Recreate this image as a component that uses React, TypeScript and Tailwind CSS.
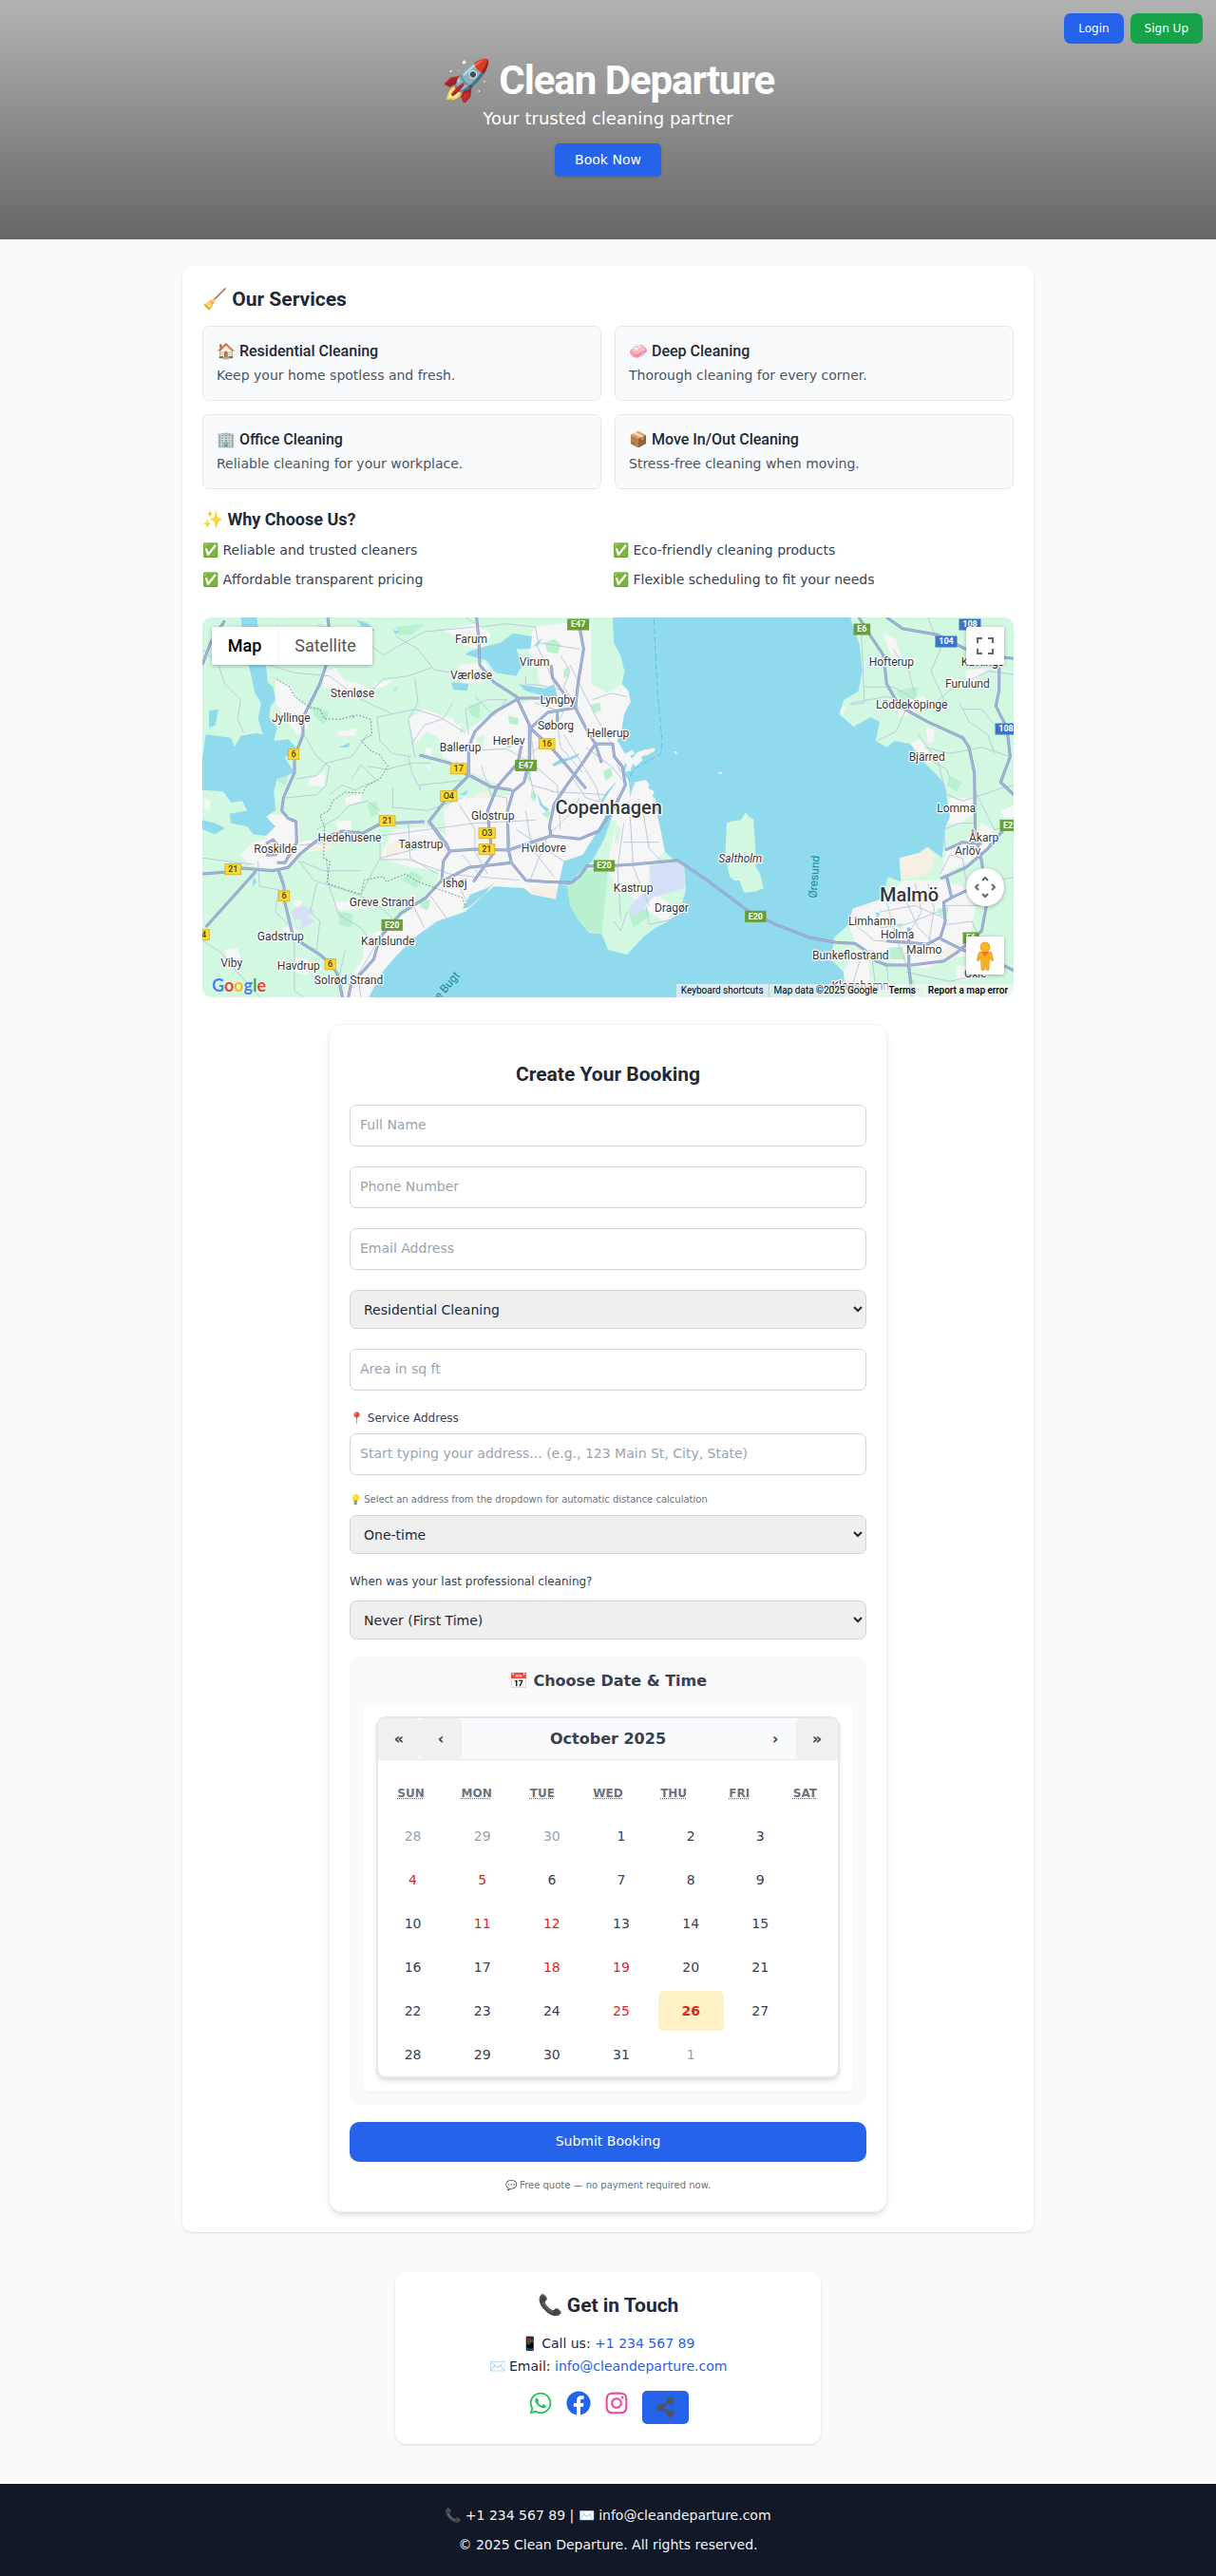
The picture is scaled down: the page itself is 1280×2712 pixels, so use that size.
import React from "react";
import { FaFacebook, FaInstagram, FaShareAlt, FaWhatsapp } from "react-icons/fa";

const services = [
  { title: "🏠 Residential Cleaning", text: "Keep your home spotless and fresh." },
  { title: "🧼 Deep Cleaning", text: "Thorough cleaning for every corner." },
  { title: "🏢 Office Cleaning", text: "Reliable cleaning for your workplace." },
  { title: "📦 Move In/Out Cleaning", text: "Stress-free cleaning when moving." },
];

const reasons = [
  "✅ Reliable and trusted cleaners",
  "✅ Eco-friendly cleaning products",
  "✅ Affordable transparent pricing",
  "✅ Flexible scheduling to fit your needs",
];

/* ---------- Map drawing (3 units per screen pixel) ---------- */

const water = [
  // Øresund and Køge Bugt
  "M1335,30 L1338,110 1360,150 1372,200 1364,240 1384,262 1392,296 1378,320 1370,340 1362,390 1350,420 1362,440 1380,470 1366,520 1386,545 1390,600 1400,560 1440,548 1464,600 1484,690 1500,770 1520,790 1560,810 1566,890 1546,960 1510,990 1470,1010 1430,1040 1380,1095 1320,1080 1304,1030 1260,1026 1230,990 1200,940 1192,880 1165,870 1155,915 1080,905 1055,885 960,880 930,905 870,960 780,990 710,1040 650,1100 600,1160 565,1230 2068,1230 2064,1150 2024,1110 2035,1040 2080,1000 2092,950 2180,920 2205,850 2245,865 2240,790 2300,775 2330,755 2375,790 2380,740 2386,690 2400,660 2390,600 2380,550 2320,490 2275,430 2225,420 2200,440 2165,420 2178,360 2150,345 2095,375 2050,335 2065,290 2110,265 2123,200 2115,120 2085,30Z",
  // Roskilde Fjord
  "M160,30 L210,30 215,60 190,100 195,180 240,180 245,235 262,250 270,290 255,310 250,345 275,380 265,420 310,415 335,440 300,475 330,520 275,540 265,580 270,640 240,660 270,690 240,720 200,715 180,690 130,680 125,650 180,640 165,610 130,615 105,580 39,575 39,470 50,400 130,410 140,440 160,405 210,395 230,400 215,350 225,300 205,270 195,220 170,120Z",
  "M60,325 L90,320 80,370 60,380Z",
  "M39,670 L80,680 110,695 80,715 39,700Z",
  "M930,122 L980,110 1020,80 1080,90 1075,130 1030,130 1050,180 1030,215 965,205 935,165 870,148 880,138Z",
  "M1038,240 L1120,255 1150,240 1160,280 1130,282 1060,262Z",
  "M825,235 L880,240 875,262 832,258Z",
  "M527,38 L560,48 583,72 552,72Z",
  "M1180,800 L1240,780 1290,700 1320,640 1340,640 1308,730 1270,800 1220,845 1205,880 1165,870Z",
  "M470,440 L505,425 500,440Z",
  "M950,880 L885,905 860,950 880,945 935,900Z",
  "M1142,494 L1170,478 1200,472 1230,458 1225,470 1190,484 1150,500Z",
  "M1098,585 L1112,620 1135,636 1126,645 1104,622Z",
  "M1298,610 L1312,585 1345,548 1342,556 1318,590 1304,615Z",
  "M1112,96 L1100,118 1084,122 1100,104Z",
  "M850,590 L878,575 872,590Z",
  "M200,850 L210,865 198,880Z",
  "M640,70 L665,74 650,84Z",
  "M510,335 L520,345 512,352Z",
  "M725,560 L730,570 724,580Z",
  "M528,700 L536,706 530,716Z",
  "M2165,960 L2180,965 2170,980Z",
];

const landOnWater = [
  "M1695,680 L1708,674 1740,670 1755,645 1765,660 1780,668 1784,740 1788,820 1800,840 1811,885 1790,895 1750,900 1735,860 1720,862 1705,850 1690,790Z",
];

const forest = [
  "M1192,880 L1240,830 1320,820 1318,900 1300,1030 1260,1020 1230,990 1200,940Z",
  "M290,480 L320,500 300,560 275,545Z",
  "M650,60 L740,50 700,85 660,85Z",
  "M405,50 L440,60 425,110 400,90Z",
  "M1385,960 L1445,930 1450,975 1400,1010Z",
  "M2400,530 L2438,550 2420,580 2390,560Z",
  "M560,620 L590,610 595,650 570,660Z",
  "M290,270 L330,290 320,330 280,320Z",
  "M470,960 L515,965 510,1010 470,1000Z",
  "M2230,260 L2300,250 2290,290 2240,290Z",
  "M2480,1120 L2540,1110 2530,1160 2490,1165Z",
  "M1340,140 L1362,170 1360,190 1325,170Z",
  "M380,310 L410,315 440,330 425,370 395,345Z",
  "M245,130 L265,150 262,185 245,180Z",
  "M640,255 L660,245 650,270Z",
];

// Parks and woods that lie inside the built-up areas
const parks: [string, string][] = [
  ["M1268,30 L1335,40 1362,150 1370,200 1330,265 1268,240Z", "#d3f8e2"],
  ["M960,215 L1040,215 1130,250 1100,270 1040,280 975,235Z", "#d3f8e2"],
  ["M860,340 L900,290 1000,285 1030,292 960,330 900,370 850,400Z", "#d3f8e2"],
  ["M850,500 L900,540 940,560 1000,580 940,600 870,600 830,570Z", "#d3f8e2"],
  ["M905,410 L930,400 925,440 905,440Z", "#d3f8e2"],
  ["M1120,110 L1150,98 1170,115 1162,145 1130,140Z", "#b9f0cf"],
  ["M1180,195 L1198,185 1194,215 1180,220Z", "#b9f0cf"],
  ["M1265,305 L1295,300 1298,325 1275,332Z", "#b9f0cf"],
  ["M880,310 L915,300 915,350 885,340Z", "#b9f0cf"],
  ["M1005,340 L1040,350 1035,370 1008,365Z", "#b9f0cf"],
  ["M980,425 L1030,415 1010,445Z", "#b9f0cf"],
  ["M1305,515 L1330,505 1335,530 1312,545Z", "#b9f0cf"],
  ["M1055,525 L1078,510 1072,550Z", "#b9f0cf"],
  ["M700,830 L735,850 715,885 670,860Z", "#b9f0cf"],
  ["M730,915 L760,925 750,955 725,945Z", "#b9f0cf"],
  ["M1078,575 L1095,590 1088,612 1075,600Z", "#b9f0cf"],
  ["M1110,650 L1140,640 1130,665Z", "#b9f0cf"],
  ["M1345,685 L1362,695 1352,745 1340,740Z", "#d3f8e2"],
  ["M1080,740 L1100,730 1095,755Z", "#b9f0cf"],
  ["M2230,1000 L2250,995 2245,1015Z", "#b9f0cf"],
  ["M2360,950 L2395,945 2390,975 2362,970Z", "#b9f0cf"],
  ["M2200,1075 L2250,1070 2260,1110 2210,1110Z", "#b9f0cf"],
];

const urban = [
  // Greater Copenhagen
  "M1090,60 L1200,45 1268,50 1268,240 1320,270 1360,240 1384,262 1392,300 1362,390 1350,420 1380,450 1366,520 1386,545 1384,700 1320,660 1290,720 1240,780 1180,800 1165,870 1155,915 1080,905 1055,885 960,880 860,960 780,990 710,1040 650,1100 600,1160 565,1230 480,1230 510,1160 545,1110 550,1040 600,1020 690,960 770,890 790,830 700,820 600,790 640,700 760,690 810,720 800,640 850,600 1010,590 1000,570 890,520 800,470 780,390 900,350 1000,290 1060,300 1110,260 1090,170 1060,120Z",
  "M1384,560 L1440,548 1464,600 1484,690 1500,770 1450,810 1450,900 1480,910 1540,950 1500,990 1450,960 1360,880 1330,980 1318,820 1340,700Z",
  "M250,650 L290,655 345,675 345,740 400,730 450,760 340,775 310,825 190,815 160,780 200,740 240,730Z",
  "M270,225 L320,250 340,290 380,320 370,380 340,400 300,350 270,300Z",
  "M420,205 L460,190 490,230 540,240 580,270 530,290 470,260 420,250Z",
  "M690,350 L740,320 830,350 860,400 800,420 750,390 710,430Z",
  "M800,70 L900,50 950,80 930,130 870,120 850,100Z",
  "M850,180 L930,170 960,220 900,240 850,230Z",
  "M460,675 L510,670 510,705 470,710Z",
  "M380,540 L425,515 425,565 370,560Z",
  "M490,600 L540,585 540,610 490,625Z",
  "M465,390 L530,380 520,405 470,405Z",
  "M290,1010 L330,1005 360,1050 320,1050Z",
  "M110,1080 L150,1075 160,1110 120,1125Z",
  "M330,1100 L370,1110 370,1160 330,1150Z",
  "M450,930 L540,925 560,950 470,955Z",
  "M580,240 L640,225 620,245 590,255Z",
  "M45,600 L65,610 60,640 45,635Z",
  "M100,55 L130,60 120,80 100,75Z",
  "M745,440 L765,445 760,465 742,460Z",
  "M745,500 L760,495 755,515Z",
  "M330,920 L355,925 345,945 328,940Z",
  // Skåne
  "M2180,920 L2260,860 2320,860 2380,860 2440,880 2480,950 2450,1100 2380,1110 2330,1140 2260,1130 2160,1100 2100,1060 2080,1000 2092,950Z",
  "M2380,680 L2400,600 2470,600 2480,650 2430,680Z",
  "M2390,760 L2440,740 2480,710 2500,680 2535,700 2520,760 2460,800 2400,830 2370,850Z",
  "M2275,430 L2300,415 2325,440 2340,490 2320,490Z",
  "M2325,375 L2350,385 2350,420 2330,430Z",
  "M2190,80 L2230,100 2245,160 2220,170Z",
  "M2235,300 L2320,280 2330,320 2260,340 2240,345Z",
  "M2450,200 L2540,180 2500,210 2450,250Z",
  "M2560,640 L2601,625 2601,660 2570,665Z",
  "M2100,1080 L2140,1080 2150,1230 2080,1230 2064,1150Z",
  "M2050,320 L2070,310 2060,340Z",
  "M2420,1130 L2470,1130 2460,1170 2420,1180Z",
];

const industrial = [
  "M1075,880 L1160,880 1155,920 1080,905Z",
  "M2240,790 L2300,775 2330,755 2350,780 2345,830 2300,850 2250,855Z",
  "M620,750 L660,735 660,780 620,790Z",
  "M370,745 L450,745 430,770 370,760Z",
  "M900,585 L950,580 940,600 900,600Z",
  "M2380,1080 L2430,1060 2420,1110 2380,1100Z",
  "M2075,1000 L2090,960 2150,930 2140,948 2100,960Z",
];

const airports = [
  "M1450,815 L1545,800 1560,820 1562,885 1510,900 1460,915 1440,940 1405,975 1385,950 1420,910 1460,890Z",
  "M318,960 L350,940 395,955 370,975 395,990 345,1015 355,985 330,985Z",
];

const minorRoads = [
  "M39,130 L90,180 110,240 160,290 150,350 170,395",
  "M250,180 L330,205 440,215 540,290 640,335 710,320 790,345 870,395",
  "M440,100 L540,95 610,150 650,125 740,75 900,60",
  "M650,90 L720,130 770,195 830,205",
  "M545,290 L610,225 690,215 760,190",
  "M640,335 L590,345 600,420 640,460 700,470",
  "M710,220 L720,300 690,350 710,470",
  "M335,540 L400,530 430,490 510,470 560,400",
  "M360,400 L400,470 440,500 430,560 400,590 300,600",
  "M510,540 L540,495 590,545 520,575 480,560 440,590",
  "M600,640 L560,610 500,625 470,660 400,700",
  "M560,500 L620,510 700,490 760,490",
  "M640,570 L640,630 750,640 860,600",
  "M345,750 L600,720 900,680 1090,670",
  "M600,720 L600,795 690,795 820,840 900,850",
  "M690,680 L695,790 780,840",
  "M345,800 L390,860 530,905 600,945 640,980 620,1010",
  "M540,830 L420,830 350,800",
  "M540,905 L600,790 720,760",
  "M215,800 L220,880 280,890 270,960 310,1000",
  "M400,870 L380,960 410,990 400,1080 330,1050 330,1210 360,1230",
  "M430,790 L440,880 470,970 540,1010 560,1040",
  "M39,790 L120,800 200,810",
  "M39,1050 L100,1090 140,1140 220,1230",
  "M600,1040 L530,1160 540,1230",
  "M490,1080 L470,1170 520,1200",
  "M870,30 L920,60 1000,50 1090,60 1100,110 1230,130",
  "M1095,120 L1130,190 1150,240",
  "M1060,215 L1060,240 1110,245 1180,260",
  "M1170,150 L1200,200 1180,250 1230,320",
  "M900,280 L960,340 1000,290 940,290 870,320 880,400",
  "M700,430 L740,370 800,350 830,300",
  "M690,470 L700,520 720,560 860,545",
  "M900,450 L1000,445 1060,480 1090,600",
  "M920,500 L950,590 1000,600 1010,750",
  "M1080,420 L1090,500 1160,560 1170,700",
  "M1090,300 L1180,330 1160,360 1170,440 1240,520",
  "M1110,430 L1060,480 1080,560 1150,580",
  "M1140,580 L1320,590",
  "M1210,540 L1250,600 1320,620",
  "M1200,180 L1250,280 1280,340 1330,430 1360,520",
  "M1270,290 L1330,270 1380,280",
  "M1250,440 L1330,500 1380,560",
  "M1180,400 L1280,560 1310,650",
  "M1230,600 L1200,650 1130,720 1070,870",
  "M1030,700 L1180,800",
  "M1060,640 L1080,760 1150,850",
  "M850,620 L900,700 900,770 940,840",
  "M860,780 L920,850 1040,860",
  "M700,930 L740,1010",
  "M760,910 L810,980",
  "M850,880 L880,940 960,870",
  "M1370,680 L1350,820 1360,980",
  "M1390,660 L1400,820 1450,940",
  "M1430,640 L1450,760 1490,800",
  "M1370,740 L1480,740",
  "M1350,890 L1450,880",
  "M1440,940 L1450,1000 1540,980",
  "M1340,990 L1360,1020 1380,960",
  "M2120,80 L2130,300 2085,305",
  "M2130,250 L2220,250 2260,270 2330,320 2400,260 2520,200 2601,210",
  "M2220,130 L2270,200 2290,280",
  "M2090,300 L2200,280 2270,300 2230,390 2170,420",
  "M2330,30 L2370,130 2340,200 2380,290 2350,330",
  "M2430,300 L2460,360 2520,400 2540,460",
  "M2440,320 L2500,320 2550,380",
  "M2320,440 L2400,460 2500,440 2590,470",
  "M2300,400 L2360,480 2390,590",
  "M2390,590 L2440,610 2560,570 2601,560",
  "M2400,540 L2390,510 2340,480",
  "M2480,580 L2540,700 2601,690",
  "M2385,760 L2380,700 2430,680 2480,680",
  "M2370,840 L2400,780 2440,790 2450,860",
  "M2100,1000 L2160,1050 2300,1060",
  "M2080,1230 L2120,1100 2150,1080 2170,1230",
  "M2200,930 L2240,1070 2290,1200",
  "M2250,900 L2300,1010 2380,1090",
  "M2180,960 L2290,940 2380,980",
  "M2180,1010 L2260,1000 2360,960",
  "M2290,870 L2310,960 2250,1060",
  "M2330,870 L2350,950 2330,1080",
  "M2260,1150 L2400,1180 2520,1150",
  "M2200,1130 L2210,1230",
  "M2380,940 L2500,940",
  "M2390,1000 L2470,990 2510,1090",
  "M2540,860 L2601,852",
];

const majorRoads = [
  "M435,30 L440,70 430,180 410,240 380,300 357,345 357,400 330,470 330,520 295,600 290,640 310,665 335,675 337,740 300,805 275,805",
  "M39,180 L65,110 110,40",
  "M39,840 L110,835 165,822 260,830 310,820 350,775 400,735 480,705 545,712 600,682 740,675",
  "M240,745 L262,732 280,755 270,780 240,780",
  "M208,832 L120,930 50,1008",
  "M278,825 L297,880 297,920 325,1035 355,1060 410,1095 440,1120 465,1155 482,1230",
  "M725,465 L820,490 880,530",
  "M1130,285 L1088,285 1040,285 960,330 900,390 880,440 880,530 820,590 755,675 810,745 820,770 800,800 795,860 745,915 665,965 600,1040 580,1110 540,1155 510,1180 500,1230",
  "M885,530 L950,565 1017,575",
  "M905,30 L912,100 915,180 960,235 1030,280 1072,370 1072,480 1055,550 1020,580 1003,640 1005,760 1015,805 1060,860 1120,865 1205,868 1232,845 1255,815 1320,815 1400,810 1540,797 1640,865 1760,955 1850,1000 1960,1042 2040,1057 2100,1060 2130,1080 2165,1115 2200,1128 2280,1128 2380,1115 2420,1090 2500,1020 2517,930 2500,800 2480,720 2477,520 2460,440 2440,410 2330,360 2240,310 2200,240 2190,150 2150,90 2112,30",
  "M1230,60 L1243,130 1225,240 1217,315 1250,380 1280,430",
  "M1217,315 L1130,330 1075,380 1072,480",
  "M1140,180 L1145,220 1180,270 1220,310",
  "M1160,325 L1160,360",
  "M1075,380 L1140,440 1200,510 1250,570",
  "M1280,430 L1240,490 1190,560 1150,620 1135,690 1140,720",
  "M1280,430 L1300,490",
  "M755,675 L820,768 900,762 1005,765 1140,720 1230,730 1290,705 1340,630 1375,560 1365,500 1340,470 1335,430 1280,430",
  "M1050,420 L1035,490 970,565 940,640 945,700 955,780 895,865",
  "M800,862 L880,820 1015,805",
  "M2200,30 L2250,65 2360,85 2450,130 2500,150 2601,160",
  "M2555,190 L2555,260 2545,310 2580,380 2590,470 2560,550 2601,590",
  "M2370,855 L2450,820 2520,760 2570,700",
  "M2385,765 L2440,740 2500,745",
  "M2390,850 L2405,915 2380,930 2385,990 2370,1040 2330,1062 2200,1052",
  "M2405,915 L2480,880",
  "M2370,1045 L2440,1080 2530,1110 2601,1145",
  "M2270,1010 L2270,1130 2280,1230",
];

type Label = [string, number, number];
const towns: Label[] = [
  ["Farum", 888, 112], ["Virum", 1088, 183], ["Værløse", 888, 225], ["Stenløse", 513, 283],
  ["Jyllinge", 319, 361], ["Lyngby", 1161, 304], ["Søborg", 1155, 385], ["Hellerup", 1320, 409],
  ["Herlev", 1007, 433], ["Ballerup", 854, 454], ["Glostrup", 956, 670], ["Hvidovre", 1117, 772],
  ["Hedehusene", 504, 739], ["Taastrup", 729, 760], ["Roskilde", 270, 775], ["Ishøj", 836, 883],
  ["Greve Strand", 606, 943], ["Gadstrup", 286, 1051], ["Karlslunde", 625, 1066], ["Viby", 131, 1135],
  ["Havdrup", 343, 1144], ["Solrød Strand", 501, 1189], ["Hofterup", 2215, 184], ["Kävlinge", 2503, 184],
  ["Furulund", 2455, 253], ["Löddeköpinge", 2279, 319], ["Bjärred", 2327, 484], ["Lomma", 2420, 646],
  ["Åkarp", 2507, 739], ["Arlöv", 2456, 781], ["Kastrup", 1400, 896], ["Dragør", 1521, 961],
  ["Limhamn", 2154, 1003], ["Holma", 2234, 1044], ["Malmo", 2318, 1093], ["Bunkeflostrand", 2086, 1111],
  ["Klagshamn", 2117, 1206], ["Oxie", 2480, 1167],
];

type Shield = [string, number, number, number, string, string];
const Y = "#fdd835";
const G = "#689f38";
const B = "#3b74c9";
const shields: Shield[] = [
  ["6", 327, 462, 34, Y, "#4a3f10"], ["17", 848, 507, 50, Y, "#4a3f10"], ["16", 1127, 429, 50, Y, "#4a3f10"],
  ["O4", 817, 594, 52, Y, "#4a3f10"], ["21", 623, 672, 50, Y, "#4a3f10"], ["O3", 938, 711, 52, Y, "#4a3f10"],
  ["21", 937, 762, 50, Y, "#4a3f10"], ["21", 136, 825, 50, Y, "#4a3f10"], ["6", 297, 909, 34, Y, "#4a3f10"],
  ["4", 44, 1032, 34, Y, "#4a3f10"], ["6", 443, 1125, 34, Y, "#4a3f10"],
  ["E47", 1226, 52, 66, G, "#ffffff"], ["E47", 1061, 497, 66, G, "#ffffff"], ["E20", 638, 1001, 64, G, "#ffffff"],
  ["E20", 1308, 814, 64, G, "#ffffff"], ["E6", 2122, 67, 50, G, "#ffffff"], ["E20", 1786, 974, 64, G, "#ffffff"],
  ["E22", 2591, 686, 64, G, "#ffffff"], ["E6", 2466, 1042, 48, G, "#ffffff"],
  ["108", 2463, 52, 66, B, "#ffffff"], ["104", 2388, 106, 66, B, "#ffffff"], ["108", 2577, 382, 66, B, "#ffffff"],
];

function MapDrawing() {
  return (
    <svg
      className="block h-full w-full"
      viewBox="39 30 2562 1200"
      preserveAspectRatio="xMidYMid slice"
      role="img"
      aria-label="Map of Copenhagen and Malmö"
      fontFamily="Roboto, sans-serif"
    >
      <rect x="-400" y="-400" width="3600" height="2200" fill="#d3f8e2" />
      {forest.map((d) => <path key={d} d={d} fill="#b9f0cf" />)}
      {urban.map((d) => <path key={d} d={d} fill="#f6f6f7" />)}
      {parks.map(([d, fill]) => <path key={d} d={d} fill={fill} />)}
      {water.map((d) => <path key={d} d={d} fill="#90daee" />)}
      {landOnWater.map((d) => <path key={d} d={d} fill="#d3f8e2" />)}
      {forest.slice(0, 1).map((d) => <path key={d} d={d} fill="#b9f0cf" />)}
      <path d="M1320,830 L1350,880 1345,990 1400,1010 1440,1000 1430,1040 1380,1092 1320,1078 1300,1030Z" fill="#d3f8e2" />
      {industrial.map((d) => <path key={d} d={d} fill="#f5efe4" />)}
      {airports.map((d) => <path key={d} d={d} fill="#d5dff7" />)}
      <g fill="#f6f6f7">
        <path d="M1375,460 L1398,448 1404,462 1390,466 1396,476 1412,456 1440,446 1446,454 1424,472 1430,480 1408,500 1398,492 1390,515 1372,518 1380,498 1370,480Z" />
        <path d="M1404,550 L1440,544 1452,560 1438,572 1462,576 1466,588 1446,594 1468,600 1470,612 1450,616 1476,622 1440,640 1412,615 1402,580Z" />
        <circle cx="1534" cy="457" r="4" />
        <ellipse cx="1675" cy="521" rx="7" ry="3" />
      </g>
      <path d="M1430,468 L1446,446 1466,442 1468,452 1446,464Z" fill="#f5efe4" />
      <g fill="none" stroke="#bccada" strokeWidth="3" strokeLinejoin="round">
        {minorRoads.map((d) => <path key={d} d={d} />)}
      </g>
      <g fill="none" stroke="#8a9cc4" strokeWidth="9" strokeLinejoin="round">
        {majorRoads.map((d) => <path key={d} d={d} />)}
      </g>
      <g fill="none" stroke="#a9b9da" strokeWidth="4" strokeLinejoin="round">
        {majorRoads.map((d) => <path key={d} d={d} />)}
      </g>
      <g fill="none" stroke="#6f8580" strokeWidth="3" strokeDasharray="5 6">
        <path d="M273,225 L315,250 330,280 380,315 410,320 425,350 470,352 530,338 570,352 575,400 540,420 570,450 600,465 625,500 600,540 560,560 545,585 490,582 450,610 440,640 410,655 425,690 422,790 442,800 432,870 540,905 550,860 610,848 620,865 680,840 720,865 860,915 870,945" />
      </g>
      <path d="M1465,35 L1475,250 1490,410 1488,460 1400,510 1385,545" fill="none" stroke="#5cc3e2" strokeWidth="3" strokeDasharray="20 8" />

      {shields.map(([text, x, y, w, fill, ink], i) => (
        <g key={i}>
          <rect x={x - w / 2} y={y - 16} width={w} height="33" fill={fill} stroke={fill === Y ? "#d9b62c" : fill} strokeWidth="3" />
          <text x={x} y={y + 9} fontSize="27" fontWeight={fill === Y ? 500 : 700} textAnchor="middle" fill={ink}>
            {text}
          </text>
        </g>
      ))}

      <g textAnchor="middle" fill="#33373d" stroke="#ffffff" strokeWidth="7" strokeLinejoin="round" paintOrder="stroke" fontSize="36">
        {towns.map(([name, x, y]) => (
          <text key={name} x={x} y={y}>{name}</text>
        ))}
        <text x="1738" y="804" fontStyle="italic">Saltholm</text>
        <text x="1322" y="651" fontSize="60" fontWeight="500">Copenhagen</text>
        <text x="2271" y="927" fontSize="60" fontWeight="500">Malmö</text>
      </g>
      <g fill="#17889c" fontSize="36" textAnchor="middle">
        <text transform="translate(1983 850) rotate(-86)">Øresund</text>
        <text transform="translate(800 1225) rotate(-50)">Køge Bugt</text>
      </g>
    </svg>
  );
}

function MapView() {
  return (
    <div className="relative mt-[29px] h-[400px] overflow-hidden rounded-[10px] font-[Roboto,sans-serif]">
      <MapDrawing />
      <div className="absolute left-2.5 top-2.5 flex text-[18px] leading-10 shadow-[0_1px_4px_rgba(0,0,0,0.3)]">
        <button type="button" className="w-[69px] rounded-l-xs bg-white font-medium text-black">Map</button>
        <button type="button" className="w-[100px] rounded-r-xs border-l border-gray-100 bg-white text-[#565656]">Satellite</button>
      </div>
      <button type="button" aria-label="Toggle fullscreen view" className="absolute right-2.5 top-2.5 grid size-10 place-items-center rounded-xs bg-white shadow-[0_1px_4px_rgba(0,0,0,0.3)]">
        <svg className="size-[18px]" viewBox="0 0 18 18" fill="#666666" aria-hidden="true">
          <path d="M0 0v6h2V2h4V0H0zm16 0h-4v2h4v4h2V0h-2zm0 16h-4v2h6v-6h-2v4zM2 12H0v6h6v-2H2v-4z" />
        </svg>
      </button>
      <button type="button" aria-label="Map camera controls" className="absolute bottom-24 right-2.5 grid size-10 place-items-center rounded-full bg-white shadow-[0_1px_4px_rgba(0,0,0,0.3)]">
        <svg className="size-6" viewBox="0 0 24 24" fill="none" stroke="#666666" strokeWidth="2" aria-hidden="true">
          <path d="M9 5 12 2l3 3M9 19l3 3 3-3M5 9l-3 3 3 3M19 9l3 3-3 3" />
        </svg>
      </button>
      <button type="button" aria-label="Open Street View" className="absolute bottom-6 right-2.5 grid size-10 place-items-center rounded-xs bg-white shadow-[0_1px_4px_rgba(0,0,0,0.3)]">
        <svg className="h-[31px] w-[18px]" viewBox="0 0 18 31" aria-hidden="true">
          <path d="M4.500 11h9c1.500 0 2.300.8 2.600 2.200l1.400 6.300c.2 1-1.700 1.600-2.200.6L13.500 16l-.6 14.200H10L9 22l-1 8.200H5.100L4.500 16l-1.800 4.100c-.5 1-2.400.4-2.200-.6l1.400-6.300C2.200 11.800 3 11 4.500 11Z" fill="#fbb11c" stroke="#d3901a" strokeWidth=".7" />
          <path d="m4.800 11 4.200 5.500L13.200 11Z" fill="#e8782b" />
          <circle cx="9" cy="6" r="5" fill="#fcb61f" stroke="#d3901a" strokeWidth=".7" />
        </svg>
      </button>
      <div className="absolute bottom-0.5 left-2.5 font-[Lato,sans-serif] text-[18px] font-bold leading-[22px] [text-shadow:0_0_2px_#fff]">
        <span className="text-[#4285f4]">G</span>
        <span className="text-[#ea4335]">o</span>
        <span className="text-[#fbbc04]">o</span>
        <span className="text-[#4285f4]">g</span>
        <span className="text-[#34a853]">l</span>
        <span className="text-[#ea4335]">e</span>
      </div>
      <div className="absolute bottom-0 right-0 flex gap-px text-[10px] leading-[14px] text-black">
        <button type="button" className="bg-[#f5f5f5]/70 px-[5px]">Keyboard shortcuts</button>
        <span className="bg-[#f5f5f5]/70 px-[5px]">Map data ©2025 Google</span>
        <a href="#terms" className="bg-[#f5f5f5]/70 px-[6px] font-medium">Terms</a>
        <a href="#report" className="bg-[#f5f5f5]/70 px-[6px] font-medium">Report a map error</a>
      </div>
    </div>
  );
}

/* ---------- Calendar ---------- */

const weekdays: [string, string][] = [
  ["Sun", "Sunday"], ["Mon", "Monday"], ["Tue", "Tuesday"], ["Wed", "Wednesday"],
  ["Thu", "Thursday"], ["Fri", "Friday"], ["Sat", "Saturday"],
];
const shown = [28, 29, 30, ...Array.from({ length: 31 }, (_, i) => i + 1), 1];
const weekend = [4, 5, 11, 12, 18, 19, 25];

function dayStyle(day: number, index: number) {
  if (index < 3 || index === shown.length - 1) return "text-gray-400";
  if (day === 26) return "bg-[#fef3c7] font-bold text-[#dc2626]";
  if (weekend.includes(day)) return "text-[#dc2626]";
  return "text-[#374151]";
}

function Calendar() {
  const nav = "h-[43px] w-11 rounded-[5px] text-[16px] font-bold leading-[43px] text-[#374151]";
  return (
    <div className="overflow-hidden rounded-[10px] border-2 border-[#e5e7eb] bg-white shadow-md">
      <div className="flex border-b border-[#e5e7eb] bg-[#f9fafb]">
        <button type="button" aria-label="Previous year" className={`${nav} bg-[#f0f0f0]`}>«</button>
        <button type="button" aria-label="Previous month" className={`${nav} bg-[#f0f0f0]`}>‹</button>
        <button type="button" className="grow text-[16px] font-bold text-[#374151]">October 2025</button>
        <button type="button" aria-label="Next month" className={nav}>›</button>
        <button type="button" aria-label="Next year" className={`${nav} bg-[#f0f0f0]`}>»</button>
      </div>
      <div className="grid grid-cols-7 pb-[13px] pt-[27px] text-center text-[12px] font-bold uppercase leading-[17px] text-[#6b7280]">
        {weekdays.map(([short, long]) => (
          <div key={short}>
            <abbr title={long}>{short}</abbr>
          </div>
        ))}
      </div>
      <div className="flex flex-wrap">
        {shown.map((day, i) => (
          <button key={i} type="button" className={`m-0.5 h-[42px] w-1/7 rounded-[5px] ${dayStyle(day, i)}`}>
            {day}
          </button>
        ))}
      </div>
    </div>
  );
}

/* ---------- Booking form ---------- */

const fieldClass = "block h-11 w-full rounded-[7px] border border-[#d1d5db] bg-white px-2.5 pb-0.5 placeholder:text-[#9ca3af]";
const selectClass = "block h-[41px] w-full rounded-[7px] border border-[#d1d5db] bg-[#efefef] px-2.5 text-[#1f2937]";
const heading = "font-[Roboto,sans-serif] font-bold text-[#1f2937]";

function BookingForm() {
  return (
    <form
      className="mx-auto mt-7 max-w-[588px] rounded-[14px] border border-[#f3f4f6] bg-white px-[21px] pb-5 pt-[38px] shadow-md"
      onSubmit={(e) => e.preventDefault()}
    >
      <h2 className={`${heading} mb-[18px] text-center text-[21px] leading-7`}>Create Your Booking</h2>
      <div className="flex flex-col gap-[21px]">
        <input className={fieldClass} type="text" aria-label="Full Name" placeholder="Full Name" />
        <input className={fieldClass} type="tel" aria-label="Phone Number" placeholder="Phone Number" />
        <input className={fieldClass} type="email" aria-label="Email Address" placeholder="Email Address" />
        <select className={selectClass} aria-label="Service" defaultValue="Residential Cleaning">
          <option>Residential Cleaning</option>
          <option>Deep Cleaning</option>
          <option>Office Cleaning</option>
          <option>Move In/Out Cleaning</option>
        </select>
        <input className={fieldClass} type="text" aria-label="Area in sq ft" placeholder="Area in sq ft" />
      </div>

      <label htmlFor="address" className="mb-[7px] mt-5 block text-[12px] leading-[18px] text-[#374151]">
        📍 Service Address
      </label>
      <input
        id="address"
        className={fieldClass}
        type="text"
        placeholder="Start typing your address... (e.g., 123 Main St, City, State)"
      />
      <p className="mb-[9px] mt-[19px] text-[10px] leading-[14px] text-[#6b7280]">
        💡 Select an address from the dropdown for automatic distance calculation
      </p>
      <select className={selectClass} aria-label="Frequency" defaultValue="One-time">
        <option>One-time</option>
        <option>Weekly</option>
        <option>Monthly</option>
      </select>

      <label htmlFor="last" className="mb-[11px] mt-5 block text-[12px] leading-[18px] text-[#374151]">
        When was your last professional cleaning?
      </label>
      <select id="last" className={selectClass} defaultValue="Never (First Time)">
        <option>Never (First Time)</option>
        <option>Within a month</option>
      </select>

      <div className="mt-[18px] rounded-[7px] bg-[#f9fafb] px-3.5 py-3.5">
        <h3 className="mb-[11px] text-center text-[16px] font-bold leading-6 text-[#374151]">📅 Choose Date &amp; Time</h3>
        <div className="rounded-[7px] bg-white p-3.5 shadow-xs">
          <Calendar />
        </div>
      </div>

      <button type="submit" className="mt-[18px] h-[42px] w-full rounded-[10px] bg-[#2563eb] pb-0.5 text-white">
        Submit Booking
      </button>
      <p className="mt-[18px] text-center text-[10px] leading-[14px] text-[#6b7280]">💬 Free quote — no payment required now.</p>
    </form>
  );
}

export default function App() {
  return (
    <div className="bg-[#f9fafb] font-['DejaVu_Sans',sans-serif] text-[14px] leading-[21px] text-[#1f2937]">
      <header className="relative flex h-[252px] flex-col items-center justify-center bg-linear-to-b/srgb from-[#b3b3b3] to-[#666666] pb-0.5 text-white">
        <div className="absolute right-3.5 top-3.5 flex gap-[7px] text-[12px] leading-[18px]">
          <button type="button" className="rounded-[7px] bg-[#2563eb] px-[15px] py-[7px]">Login</button>
          <button type="button" className="rounded-[7px] bg-[#16a34a] px-[15px] py-[7px]">Sign Up</button>
        </div>
        <h1 className="font-[Roboto,sans-serif] text-[42px] font-bold leading-[42px] tracking-tight">🚀 Clean Departure</h1>
        <p className="mt-[7px] text-[18px] leading-6">Your trusted cleaning partner</p>
        <button type="button" className="mt-3.5 h-[35px] rounded-[5px] bg-[#2563eb] px-[21px] shadow-sm">Book Now</button>
      </header>

      <main>
        <section className="mx-auto mt-7 max-w-[896px] rounded-[10px] bg-white p-[21px] shadow-sm">
          <h2 className={`${heading} mb-3.5 text-[21px] leading-7`}>🧹 Our Services</h2>
          <div className="grid grid-cols-2 gap-3.5">
            {services.map((s) => (
              <article key={s.title} className="rounded-[7px] border border-[#e5e7eb] bg-[#f9fafb] px-3.5 pb-[15px] pt-3.5">
                <h3 className="font-[Roboto,sans-serif] text-[16px] font-medium leading-[23px]">{s.title}</h3>
                <p className="mt-1 text-[#4b5563]">{s.text}</p>
              </article>
            ))}
          </div>
          <h3 className={`${heading} mb-2.5 mt-5 text-[18px] leading-6`}>✨ Why Choose Us?</h3>
          <ul className="grid grid-cols-2 gap-2.5 text-[#374151]">
            {reasons.map((r) => (
              <li key={r}>{r}</li>
            ))}
          </ul>
          <MapView />
          <BookingForm />
        </section>

        <section className="mx-auto mt-[42px] max-w-[448px] rounded-[10px] bg-white p-[21px] text-center shadow-sm">
          <h2 className={`${heading} mb-3.5 text-[21px] leading-7`}>📞 Get in Touch</h2>
          <p className="leading-6">
            📱 Call us: <a href="tel:+123456789" className="text-[#2563eb]">+1 234 567 89</a>
          </p>
          <p className="leading-6">
            ✉️ Email: <a href="mailto:info@cleandeparture.com" className="text-[#2563eb]">info@cleandeparture.com</a>
          </p>
          <div className="mt-3.5 flex items-start justify-center gap-3.5">
            <a href="#whatsapp" aria-label="WhatsApp" className="text-[#22c55e]"><FaWhatsapp size={26} /></a>
            <a href="#facebook" aria-label="Facebook" className="text-[#2563eb]"><FaFacebook size={26} /></a>
            <a href="#instagram" aria-label="Instagram" className="text-[#ec4899]"><FaInstagram size={26} /></a>
            <button type="button" aria-label="Share" className="rounded-[5px] bg-[#2563eb] px-3.5 py-[7px] text-[#4b5563]">
              <FaShareAlt size={21} />
            </button>
          </div>
        </section>
      </main>

      <footer className="mt-[42px] flex flex-col gap-2.5 bg-[#111827] pb-[22px] pt-[23px] text-center text-[#f3f4f6]">
        <p>📞 +1 234 567 89 | ✉️ info@cleandeparture.com</p>
        <p>© 2025 Clean Departure. All rights reserved.</p>
      </footer>
    </div>
  );
}
